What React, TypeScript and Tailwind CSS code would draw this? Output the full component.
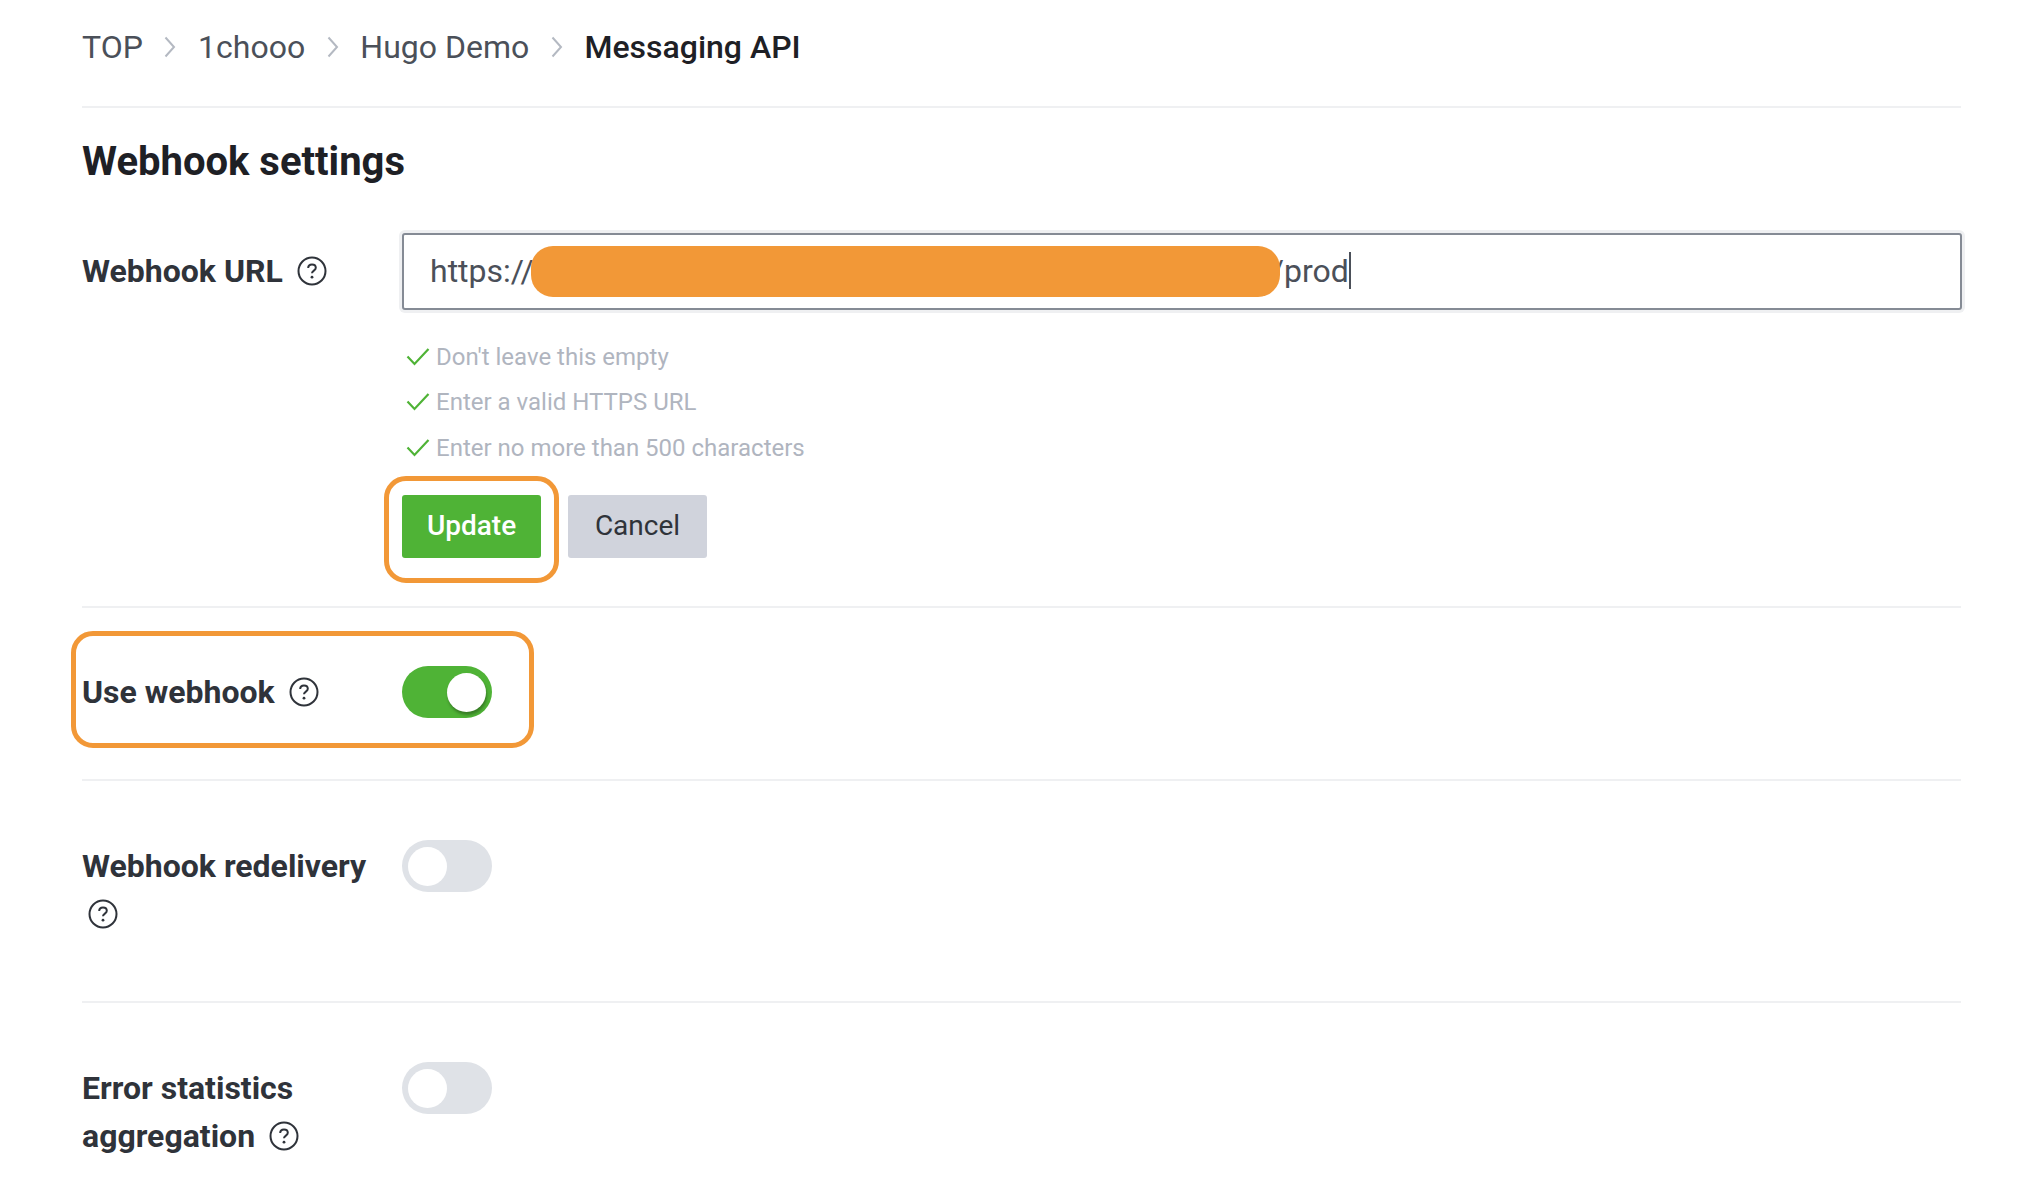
import React from "react";

function Help() {
  return (
    <svg className="inline-block ml-[6px] w-[30px] h-[30px] align-[-4px]" viewBox="0 0 30 30" fill="none">
      <circle cx="15" cy="15" r="13.5" stroke="#2f333a" strokeWidth="2" />
      <path d="M11.2 12c0-2.2 1.6-3.6 3.8-3.6s3.8 1.4 3.8 3.3c0 2.9-3.8 2.9-3.8 5.6" stroke="#2f333a" strokeWidth="2" />
      <circle cx="15" cy="21.2" r="1.4" fill="#2f333a" />
    </svg>
  );
}

function Chevron() {
  return (
    <svg className="w-[12px] h-[22px] mx-[21.6px]" viewBox="0 0 12 22" fill="none">
      <path d="M1.5 1.5 L10 11 L1.5 20.5" stroke="#b4b9c2" strokeWidth="2" />
    </svg>
  );
}

function Check({ text }: { text: string }) {
  return (
    <div className="flex items-center h-[45.5px] text-[24px] text-[#b0b5bf]">
      <svg className="w-[24px] h-[20px] ml-[4px] mr-[6px]" viewBox="0 0 24 20" fill="none">
        <path d="M1.5 9.5 L8.5 17 L22.5 2" stroke="#4fb336" strokeWidth="2.2" />
      </svg>
      <span>{text}</span>
    </div>
  );
}

function Toggle({ on }: { on?: boolean }) {
  return (
    <div className={`flex items-center w-[90px] h-[52px] rounded-full shrink-0 px-[6px] ${on ? "bg-[#4fb336] justify-end" : "bg-[#dfe2e7] justify-start"}`}>
      <div className={`w-[39px] h-[39px] rounded-full bg-white ${on ? "shadow-[1px_3px_3px_rgba(0,0,0,0.3)]" : ""}`} />
    </div>
  );
}

export default function App() {
  return (
    <div className="w-[2020px] h-[1198px] overflow-hidden bg-white pl-[82px] pr-[59px] font-['Roboto',sans-serif] text-[#2f333a]">
      <nav className="flex items-center h-[108px] pb-[12px] text-[32px] text-[#4b5059] border-b-2 border-[#eff0f2]">
        <span>TOP</span>
        <Chevron />
        <span>1chooo</span>
        <Chevron />
        <span>Hugo Demo</span>
        <Chevron />
        <span className="font-medium text-[#1e2025]">Messaging API</span>
      </nav>

      <h1 className="mt-[27px] text-[40px] leading-[54px] font-bold text-[#1e2025]">Webhook settings</h1>

      <section className="flex mt-[44px] h-[375px] border-b-2 border-[#eff0f2]">
        <div className="w-[320px] shrink-0 pr-[20px] pt-[14px] text-[32px] leading-[48px] font-bold">
          Webhook URL <Help />
        </div>
        <div className="flex-1">
          <div className="flex items-center h-[77px] -mr-[1px] pl-[26px] pb-[2px] text-[32px] text-[#4b5059] bg-white border-2 border-[#858b95] rounded-[3px] shadow-[0_0_0_3px_#eff0f2]">
            <span>https://</span>
            <span className="relative z-10 w-[749px] h-[51px] mt-[2px] -ml-[3px] rounded-[22px] bg-[#f29837]" />
            <span className="-ml-[9px]">/prod</span>
            <span className="w-[2px] h-[37px] bg-[#4b5059]" />
          </div>
          <div className="mt-[24px]">
            <Check text="Don't leave this empty" />
            <Check text="Enter a valid HTTPS URL" />
            <Check text="Enter no more than 500 characters" />
          </div>
          <div className="relative flex gap-[27px] mt-[24px]">
            <button className="w-[139px] h-[63px] rounded-[3px] bg-[#4fb336] text-white text-[28px] font-medium">Update</button>
            <button className="w-[139px] h-[63px] rounded-[3px] bg-[#d0d3dc] text-[#2f333a] text-[28px]">Cancel</button>
            <div className="absolute -left-[18px] -top-[19px] w-[175px] h-[107px] border-[5px] border-[#f29837] rounded-[22px]" />
          </div>
        </div>
      </section>

      <section className="relative flex h-[173px] pt-[58px] border-b-2 border-[#eff0f2]">
        <div className="w-[320px] shrink-0 pr-[20px] text-[32px] leading-[52px] font-bold">
          Use webhook <Help />
        </div>
        <Toggle on />
        <div className="absolute -left-[11px] top-[23px] w-[463px] h-[117px] border-[5px] border-[#f29837] rounded-[22px]" />
      </section>

      <section className="flex h-[222px] pt-[59px] border-b-2 border-[#eff0f2]">
        <div className="w-[320px] shrink-0 pr-[20px] pt-[2px] text-[32px] leading-[48px] font-bold">
          Webhook redelivery <Help />
        </div>
        <Toggle />
      </section>

      <section className="flex pt-[59px]">
        <div className="w-[320px] shrink-0 pr-[20px] pt-[2px] text-[32px] leading-[48px] font-bold">
          Error statistics aggregation <Help />
        </div>
        <Toggle />
      </section>
    </div>
  );
}
